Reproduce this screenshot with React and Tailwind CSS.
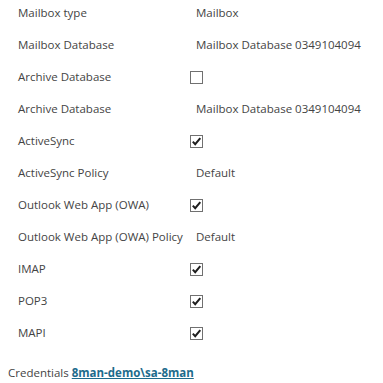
import React from 'react';

const rows = [
  { label: 'Mailbox type', value: 'Mailbox' },
  { label: 'Mailbox Database', value: 'Mailbox Database 0349104094' },
  { label: 'Archive Database', check: false },
  { label: 'Archive Database', value: 'Mailbox Database 0349104094' },
  { label: 'ActiveSync', check: true },
  { label: 'ActiveSync Policy', value: 'Default' },
  { label: 'Outlook Web App (OWA)', check: true },
  { label: 'Outlook Web App (OWA) Policy', value: 'Default' },
  { label: 'IMAP', check: true },
  { label: 'POP3', check: true },
  { label: 'MAPI', check: true },
];

function Checkbox({ checked }) {
  return (
    <div className="w-[13px] h-[13px] border border-[#707070] bg-white flex items-center justify-center ml-[-6px]">
      {checked && (
        <svg width="11" height="11" viewBox="0 0 11 11">
          <path d="M1.8 5.6 L4.2 8.2 L9.3 2.2" fill="none" stroke="#1e1e1e" strokeWidth="2" />
        </svg>
      )}
    </div>
  );
}

export default function App() {
  return (
    <div className="w-[383px] h-[383px] bg-white text-[#444] text-[11.5px] font-['Segoe_UI','Open_Sans',sans-serif] overflow-hidden">
      <div className="flex flex-col gap-[6px] pl-[18px]">
        {rows.map((row, i) => (
          <div key={i} className="flex items-center h-[26px]">
            <div className="min-w-[178px] pr-[10px] whitespace-nowrap">{row.label}</div>
            {row.value !== undefined ? (
              <div className="whitespace-nowrap">{row.value}</div>
            ) : (
              <Checkbox checked={row.check} />
            )}
          </div>
        ))}
      </div>
      <div className="mt-[19px] pl-[8px] leading-[16px] whitespace-nowrap">
        Credentials{' '}
        <a href="#" className="font-bold underline text-[#1d6b8c]">8man-demo\sa-8man</a>
      </div>
    </div>
  );
}
